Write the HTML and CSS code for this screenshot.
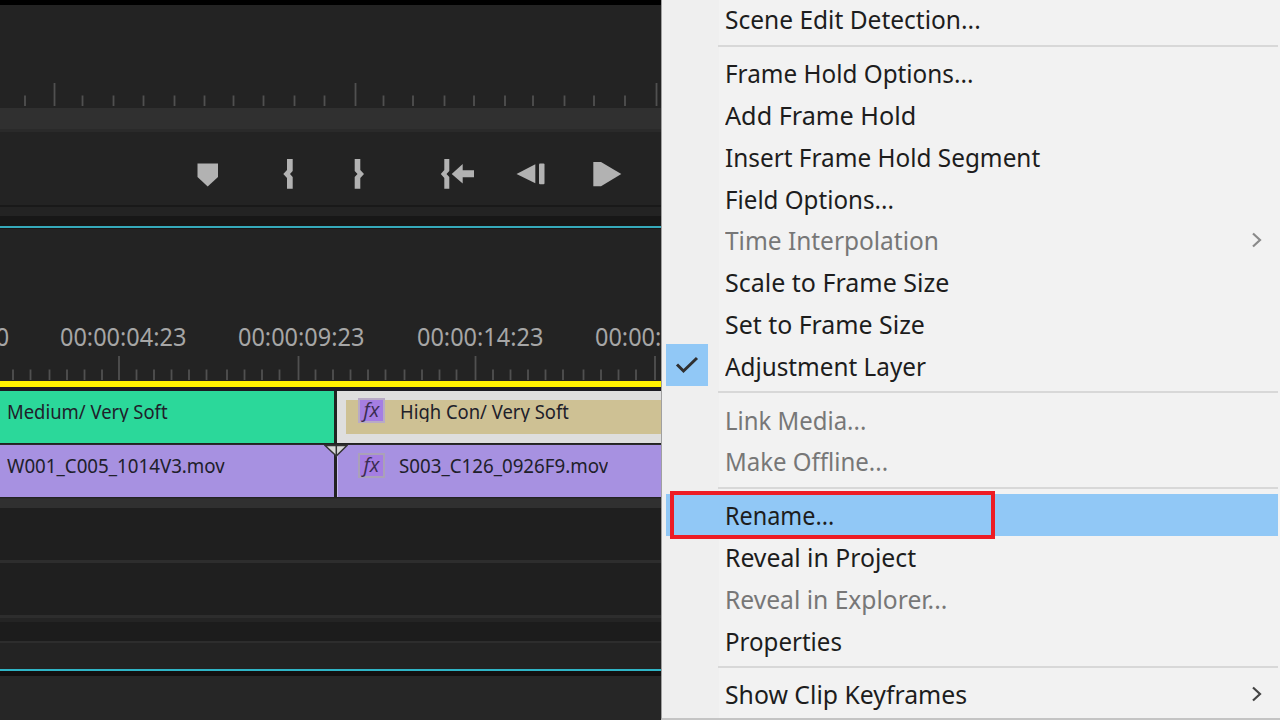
FILE: index.html
```html
<!DOCTYPE html>
<html lang="en">
<head>
    <meta charset="UTF-8">
    <meta name="viewport" content="width=device-width, initial-scale=1.0">
    <title>Timeline - Clip Menu</title>
    <link rel="stylesheet" href="styles.css">
</head>
<body>
    <div class="app">
        <main class="editor">
            <section class="monitor">
                <svg class="monitor-ruler" width="661" height="103" viewBox="0 5 661 103">
                    <path class="tick" d="M25 95.5V106M82.5 95.5V106M113.5 95.5V106M143.5 95.5V106M174.5 95.5V106M204.5 95.5V106M233.5 95.5V106M263.5 95.5V106M294.5 95.5V106M324.5 95.5V106M383.5 95.5V106M413 95.5V106M444.5 95.5V106M474 95.5V106M505 95.5V106M533 95.5V106M564.5 95.5V106M594 95.5V106M625 95.5V106"/>
                    <path class="tick" d="M54.5 83V106M355.5 83V106M656.5 83V106"/>
                </svg>
                <div class="scrollbar"></div>
                <svg class="transport" width="661" height="73" viewBox="0 132 661 73">
                    <path d="M197.5 163.5H218V177L207.7 186.5L197.5 177Z"/>
                    <path d="M287 159H292.7V171L290 174L292.7 177V188.7H287V178L283.3 174L287 170Z"/>
                    <path d="M354.7 159H360.3V170L364 174L360.3 178V188.7H354.7V177L357.5 174L354.7 171Z"/>
                    <path d="M444.3 159H449.3V171L446.5 174L449.3 177V188.7H444.3V178L440.8 174L444.3 170Z"/>
                    <path d="M451.7 174L462.7 164V170.3H474V177.3H462.7V183.5Z"/>
                    <path d="M516.5 174L535.3 164.3V183.2Z"/>
                    <rect x="539" y="163.5" width="5.5" height="20.7" rx="1"/>
                    <path d="M593.3 162H601L621.3 174L601 186.3H593.3Z"/>
                </svg>
                <div class="monitor-foot"></div>
                <div class="panel-gap"></div>
            </section>

            <section class="timeline">
                <div class="time-ruler">
                    <div class="timecodes">
                        <span class="timecode">00:00:00:00</span>
                        <span class="timecode">00:00:04:23</span>
                        <span class="timecode">00:00:09:23</span>
                        <span class="timecode">00:00:14:23</span>
                        <span class="timecode">00:00:19:23</span>
                    </div>
                    <svg width="661" height="26" viewBox="0 354 661 26">
                        <path class="tick" d="M13 368.5V379M30.5 368.5V379M49.5 368.5V379M67 368.5V379M84.5 368.5V379M102 368.5V379M136.5 368.5V379M154 368.5V379M171.5 368.5V379M189 368.5V379M206.5 368.5V379M227 368.5V379M244.5 368.5V379M262 368.5V379M279.5 368.5V379M315.5 368.5V379M333 368.5V379M350.5 368.5V379M368 368.5V379M385.5 368.5V379M404.5 368.5V379M422 368.5V379M439.5 368.5V379M456.5 368.5V379M493 368.5V379M510.5 368.5V379M528 368.5V379M545.5 368.5V379M563 368.5V379M583.5 368.5V379M601 368.5V379M618.5 368.5V379M636 368.5V379"/>
                        <path class="tick" d="M119 355V379M298.5 355V379M475.5 355V379M655 355V379"/>
                    </svg>
                </div>
                <div class="work-area"></div>

                <div class="track">
                    <div class="clip clip-first clip-green"><span class="clip-name">Medium/ Very Soft</span></div>
                    <div class="clip clip-selected">
                        <span class="fx">fx</span>
                        <span class="clip-name">High Con/ Very Soft</span>
                    </div>
                </div>
                <div class="track">
                    <div class="clip clip-first clip-purple"><span class="clip-name file-name">W001_C005_1014V3.mov</span></div>
                    <div class="clip clip-purple clip-second">
                        <span class="fx fx-plain">fx</span>
                        <span class="clip-name file-name">S003_C126_0926F9.mov</span>
                    </div>
                    <svg class="through-edit" width="24" height="12" viewBox="0 0 24 12">
                        <path d="M1 .5H23L12.3 11Z"/>
                        <path d="M12.3 0V12"/>
                    </svg>
                </div>

                <div class="track-edge"></div>
                <div class="empty-track"></div>
                <div class="empty-track"></div>
                <div class="track-divider"></div>
                <div class="master-track"></div>
                <div class="timeline-foot"></div>
            </section>
        </main>

        <nav class="menu">
            <div class="item"><span class="label w-scene">Scene Edit Detection...</span></div>
            <div class="separator"></div>
            <div class="item"><span class="label w-hold-options">Frame Hold Options...</span></div>
            <div class="item"><span class="label w-add">Add Frame Hold</span></div>
            <div class="item"><span class="label w-insert">Insert Frame Hold Segment</span></div>
            <div class="item"><span class="label w-field">Field Options...</span></div>
            <div class="item disabled">
                <span class="label w-time">Time Interpolation</span>
                <svg class="arrow" width="12" height="16" viewBox="0 0 12 16"><path d="M2 1.5L9 8L2 14.5"/></svg>
            </div>
            <div class="item"><span class="label w-scale">Scale to Frame Size</span></div>
            <div class="item"><span class="label w-set">Set to Frame Size</span></div>
            <div class="item">
                <span class="check">
                    <svg width="24" height="18" viewBox="0 0 24 18"><path d="M2 8.5L8.5 15L22 2"/></svg>
                </span>
                <span class="label w-adjust">Adjustment Layer</span>
            </div>
            <div class="separator"></div>
            <div class="item disabled"><span class="label w-link">Link Media...</span></div>
            <div class="item disabled"><span class="label w-offline">Make Offline...</span></div>
            <div class="separator"></div>
            <div class="item active">
                <span class="label w-rename">Rename...</span>
                <span class="callout"></span>
            </div>
            <div class="item"><span class="label w-project">Reveal in Project</span></div>
            <div class="item disabled"><span class="label w-explorer">Reveal in Explorer...</span></div>
            <div class="item"><span class="label w-props">Properties</span></div>
            <div class="separator"></div>
            <div class="item">
                <span class="label w-keyframes">Show Clip Keyframes</span>
                <svg class="arrow" width="12" height="16" viewBox="0 0 12 16"><path d="M2 1.5L9 8L2 14.5"/></svg>
            </div>
        </nav>
    </div>
</body>
</html>
```
FILE: styles.css
```css
* {
    box-sizing: border-box;
}
body {
    margin: 0;
    background: #232323;
    font-family: "Noto Sans", "Open Sans", sans-serif;
}
svg {
    display: block;
}
.app {
    display: flex;
    width: 1280px;
    height: 720px;
    overflow: hidden;
}

/* editor panels */
.editor {
    width: 661px;
    flex: none;
    overflow: hidden;
}
.monitor {
    border-top: 5px solid #000;
    border-bottom: 2px solid #35a9ba;
    height: 228px;
    background: #232323;
}
.tick {
    stroke: #505050;
    stroke-width: 1.8;
    fill: none;
}
.scrollbar {
    height: 24px;
    background: #303030;
    border-bottom: 3px solid #2a2a2a;
}
.transport {
    fill: #b2b2b2;
}
.monitor-foot {
    height: 11px;
    border-top: 2px solid #191919;
}
.panel-gap {
    height: 10px;
    background: #171717;
}
.timeline {
    border-top: 1px solid #191616;
}
.time-ruler {
    height: 152px;
    background: #232323;
    display: flex;
    flex-direction: column;
    justify-content: flex-end;
}
.timecodes {
    display: flex;
    gap: 52.5px;
    margin-left: -119px;
    height: 37px;
}
.timecode {
    flex: none;
    width: 126px;
    font-size: 26px;
    line-height: 36px;
    white-space: nowrap;
    color: #a6a6a6;
    transform: scaleX(0.903);
    transform-origin: 0 50%;
}
.timecode:first-child {
    text-indent: 2px;
}
.work-area {
    height: 10px;
    background: #fff200;
    border-bottom: 4px solid #1b1b22;
}
.track {
    position: relative;
    display: flex;
    height: 54px;
    padding-bottom: 1px;
    gap: 3px;
    background: #222;
    border-bottom: 1px solid #2b2b2b;
}
.clip {
    display: flex;
    align-items: flex-start;
}
.clip-first {
    width: 334px;
    flex: none;
    padding-left: 7px;
}
.clip-green {
    background: #2bd89a;
}
.clip-purple {
    background: #a791e1;
}
.clip-second {
    flex: 1;
    padding-left: 21px;
    border-left: 1px solid #c9bcf0;
}
.clip-selected {
    flex: 1;
    padding-left: 12px;
    border: solid #dedede;
    border-width: 9px 0 9px 9px;
    background: #cec194;
}
.clip-name {
    height: 31px;
    overflow: hidden;
    font-size: 19px;
    line-height: 43px;
    white-space: nowrap;
    color: #20202a;
    transform: scaleX(0.97);
    transform-origin: 0 50%;
}
.clip-selected .clip-name {
    margin-top: -9px;
}
.file-name {
    height: 43px;
    transform: scaleX(0.985);
}
.fx {
    flex: none;
    width: 27px;
    height: 25px;
    margin: -2px 15px 0 0;
    border: 2px solid #b8aac6;
    background: #a57ee2;
    color: #3a2c50;
    font: italic 20px/19px "Open Sans", sans-serif;
    text-align: center;
}
.fx-plain {
    margin: 8px 14px 0 -1px;
    border-color: #aaa1b8;
}
.through-edit {
    position: absolute;
    left: 324px;
    top: 0;
    fill: #d8d8d8;
    stroke: #333;
    stroke-width: 1.5;
}
.track-edge {
    height: 9px;
    background: #303030;
}
.empty-track {
    height: 55px;
    background: #1f1f1f;
    border-bottom: 3px solid #2d2d2d;
}
.track-divider {
    height: 4px;
    background: #242424;
}
.master-track {
    height: 21px;
    background: #1c1c1c;
    border-bottom: 2px solid #2d2d2d;
}
.timeline-foot {
    height: 77px;
    background: linear-gradient(#232323 0 26px, #2fb5c6 26px 28px, #121010 28px 33px, #262626 33px);
}

/* context menu */
.menu {
    flex: 1;
    height: 720px;
    padding: 0 2px 0 4px;
    border-left: 1px solid #a0a0a0;
    border-bottom: 2px solid #c4c4c4;
    background: linear-gradient(90deg, #efefef 0 57px, #f2f2f2 57px);
    display: flex;
    flex-direction: column;
}
.item:first-child {
    margin-top: -1.9px;
}
.item {
    position: relative;
    flex: none;
    display: flex;
    align-items: center;
    height: 41.75px;
    padding-left: 59px;
    color: #1d1d1d;
}
.label {
    padding-top: 2px;
    font-size: 26px;
    line-height: 39px;
    white-space: nowrap;
    transform-origin: 0 50%;
}
/* condensed label widths */
.w-scene { transform: scaleX(0.943); }
.w-hold-options { transform: scaleX(0.934); }
.w-add { transform: scaleX(0.97); }
.w-insert { transform: scaleX(0.936); }
.w-field { transform: scaleX(0.929); }
.w-time { transform: scaleX(0.94); }
.w-scale { transform: scaleX(0.962); }
.w-set { transform: scaleX(0.957); }
.w-adjust { transform: scaleX(0.934); }
.w-link { transform: scaleX(0.921); }
.w-offline { transform: scaleX(0.923); }
.w-rename { transform: scaleX(0.9); }
.w-project { transform: scaleX(0.952); }
.w-explorer { transform: scaleX(0.947); }
.w-props { transform: scaleX(0.926); }
.w-keyframes { transform: scaleX(0.953); }
.disabled {
    color: #777;
}
.active {
    background: #91c8f6;
}
.separator {
    flex: none;
    height: 12.2px;
    margin-left: 52px;
    background: linear-gradient(#d8d8d8, #d8d8d8) 0 5px / 100% 2px no-repeat;
}
.arrow {
    margin: 0 15px 0 auto;
    fill: none;
    stroke: #444;
    stroke-width: 2.2;
}
.disabled .arrow {
    stroke: #8a8a8a;
}
.check {
    position: absolute;
    left: 0;
    top: 0;
    width: 42px;
    height: 42px;
    display: flex;
    align-items: center;
    justify-content: center;
    background: #91c8f6;
}
.check svg {
    fill: none;
    stroke: #303030;
    stroke-width: 3;
}
.callout {
    position: absolute;
    left: 4px;
    top: -3px;
    width: 325px;
    height: 48px;
    border: 4px solid #ed1c24;
}
```
